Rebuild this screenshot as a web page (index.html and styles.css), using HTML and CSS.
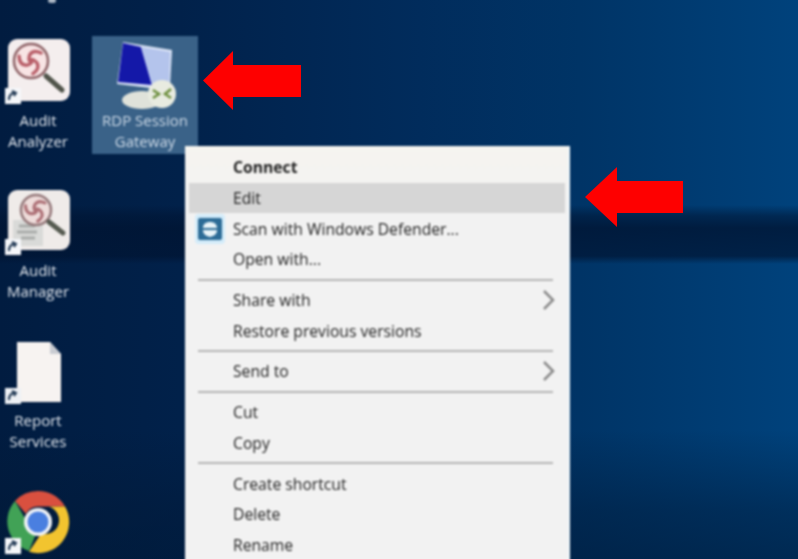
FILE: index.html
```html
<!DOCTYPE html>
<html lang="en">
<head>
<meta charset="utf-8">
<title>Desktop context menu</title>
<link rel="stylesheet" href="styles.css">
</head>
<body>
<main class="desktop">
  <span class="cut-label"></span>

  <div class="shortcut at-analyzer">
    <div class="glyph">
      <svg width="66" height="66" viewBox="0 0 66 66">
        <rect x="3" y="0" width="62" height="62" rx="9" fill="#f4eeee"/>
        <circle cx="26" cy="22" r="17" fill="#f8e4e4" stroke="#8f6468" stroke-width="2.500"/>
        <g transform="translate(26 22)" fill="none" stroke="#b9606a" stroke-width="3.500" stroke-linecap="round">
          <path d="M0 2C-5-4 0-13 10-8"/>
          <path d="M0 2C-5-4 0-13 10-8" transform="rotate(120)"/>
          <path d="M0 2C-5-4 0-13 10-8" transform="rotate(240)"/>
        </g>
        <path d="M41 37l16 14" stroke="#50544a" stroke-width="5" stroke-linecap="round"/>
        <rect x="0" y="49" width="16" height="16" fill="#f5f7fa"/>
        <path d="M4 61c0-5 2-7 6-7M7 52l4 2-2 3" fill="none" stroke="#223a55" stroke-width="2"/>
      </svg>
    </div>
    <p class="name">Audit<br>Analyzer</p>
  </div>

  <div class="shortcut at-manager">
    <div class="glyph">
      <svg width="66" height="66" viewBox="0 0 66 66">
        <rect x="3" y="0" width="62" height="60" rx="9" fill="#efebe9"/>
        <rect x="8" y="30" width="30" height="26" fill="#d9dad8"/>
        <path d="M14 36h16M12 42h20M16 48h14" stroke="#a9aca9" stroke-width="3"/>
        <circle cx="31" cy="20" r="15" fill="#eedcda" stroke="#94787a" stroke-width="2.500"/>
        <g transform="translate(31 20) scale(.88)" fill="none" stroke="#ad7076" stroke-width="3.500" stroke-linecap="round">
          <path d="M0 2C-5-4 0-13 10-8"/>
          <path d="M0 2C-5-4 0-13 10-8" transform="rotate(120)"/>
          <path d="M0 2C-5-4 0-13 10-8" transform="rotate(240)"/>
        </g>
        <path d="M44 32l14 11" stroke="#555a50" stroke-width="5" stroke-linecap="round"/>
        <rect x="0" y="49" width="16" height="16" fill="#f5f7fa"/>
        <path d="M4 61c0-5 2-7 6-7M7 52l4 2-2 3" fill="none" stroke="#223a55" stroke-width="2"/>
      </svg>
    </div>
    <p class="name">Audit<br>Manager</p>
  </div>

  <div class="shortcut at-report">
    <div class="glyph">
      <svg width="66" height="66" viewBox="0 0 66 66">
        <path d="M12 0h33l11 12v48H12z" fill="#f7f3f1"/>
        <path d="M45 0v12h11z" fill="#c9ccd2"/>
        <rect x="0" y="46" width="16" height="16" fill="#eef1f5"/>
        <path d="M4 58c0-5 2-7 6-7M7 49l4 2-2 3" fill="none" stroke="#223a55" stroke-width="2"/>
      </svg>
    </div>
    <p class="name">Report<br>Services</p>
  </div>

  <div class="shortcut at-chrome">
    <div class="glyph">
      <svg width="66" height="66" viewBox="0 0 66 66">
        <path d="M33 2a31 31 0 0 1 27 15.500H33a13 13 0 0 0-12 7.500L10 12A31 31 0 0 1 33 2z" fill="#d9503f"/>
        <path d="M10 12l12 21a12 12 0 0 0 9 12l-7 17A31 31 0 0 1 10 12z" fill="#41a256"/>
        <path d="M60 17.500A31 31 0 0 1 24 62.700l12-18a13 13 0 0 0 8-27z" fill="#f2c42f"/>
        <circle cx="33" cy="33" r="14" fill="#f2f4f7"/>
        <circle cx="33" cy="33" r="10.500" fill="#4a7fe0"/>
        <rect x="0" y="49" width="16" height="16" fill="#f5f7fa"/>
        <path d="M4 61c0-5 2-7 6-7M7 52l4 2-2 3" fill="none" stroke="#223a55" stroke-width="2"/>
      </svg>
    </div>
  </div>

  <div class="shortcut at-rdp selected">
    <div class="glyph">
      <svg width="66" height="70" viewBox="0 0 66 70">
        <path d="M11 1l49 8-2 37-3 3-50-6z" fill="#dde5f6"/>
        <path d="M11 2l18 4 11 38-34-3z" fill="#1418a8"/>
        <path d="M29 6l29 5-1 33-17 0z" fill="#b4c4ec"/>
        <ellipse cx="30" cy="59" rx="20" ry="9" fill="#dfe2da"/>
        <circle cx="50" cy="53" r="14" fill="#e8ebe0"/>
        <path d="M41 49l6 4-6 4M59 48l-6 5 6 4" fill="none" stroke="#6d8f3e" stroke-width="2.500"/>
      </svg>
    </div>
    <p class="name">RDP Session<br>Gateway</p>
  </div>

  <svg class="arrow arrow-one" width="98" height="59" viewBox="0 0 98 59"><path d="M0 29.500L30 0v14h68v32H30v13z"/></svg>
  <svg class="arrow arrow-two" width="98" height="60" viewBox="0 0 98 60"><path d="M0 30L32 0v14h66v32H32v14z"/></svg>

  <nav class="menu">
    <div class="item strong">Connect</div>
    <div class="item active">Edit</div>
    <div class="item">
      <svg class="shield" width="30" height="30" viewBox="0 0 30 30">
        <rect width="30" height="30" rx="4" fill="#d3ecfa"/>
        <rect x="3" y="4" width="24" height="22" rx="2" fill="#2c6b96"/>
        <path d="M8 14c0-4 3-6 7-6s7 2 7 6zM8 16h14c0 4-3 6-7 7-4-1-7-3-7-7z" fill="#e8f3f8"/>
      </svg>
      Scan with Windows Defender...
    </div>
    <div class="item">Open with...</div>
    <hr class="rule">
    <div class="item">Share with<svg class="chev" width="14" height="22" viewBox="0 0 14 22"><path d="M2 2l9 9-9 9"/></svg></div>
    <div class="item">Restore previous versions</div>
    <hr class="rule">
    <div class="item">Send to<svg class="chev" width="14" height="22" viewBox="0 0 14 22"><path d="M2 2l9 9-9 9"/></svg></div>
    <hr class="rule">
    <div class="item">Cut</div>
    <div class="item">Copy</div>
    <hr class="rule">
    <div class="item">Create shortcut</div>
    <div class="item">Delete</div>
    <div class="item">Rename</div>
  </nav>
</main>
</body>
</html>
```
FILE: styles.css
```css
* { box-sizing: border-box; }
html, body { margin: 0; height: 100%; overflow: hidden; background: #012a55; }

.desktop {
  position: relative;
  width: 798px;
  height: 559px;
  overflow: hidden;
  font-family: "Open Sans", "Liberation Sans", sans-serif;
  background:
    linear-gradient(180deg, transparent 0, transparent 205px, rgba(0, 20, 50, .55) 216px, rgba(0, 20, 50, .8) 228px, rgba(0, 20, 50, .7) 256px, transparent 264px),
    linear-gradient(180deg, transparent 0, transparent 430px, rgba(0, 25, 55, .45) 510px, rgba(0, 25, 55, .6) 559px),
    linear-gradient(90deg, #011c40 0, #01214a 180px, #012c5c 420px, #003466 580px, #00427c 798px);
}

.cut-label {
  position: absolute;
  left: 48px;
  top: -2px;
  width: 8px;
  height: 5px;
  border-radius: 3px;
  background: #aeb9c6;
  filter: blur(1px);
}

.shortcut {
  position: absolute;
  display: flex;
  flex-direction: column;
  align-items: center;
  filter: blur(1.1px);
}
.at-analyzer { left: 0; top: 39px; width: 76px; }
.at-manager  { left: 0; top: 190px; width: 76px; }
.at-report   { left: 0; top: 342px; width: 76px; }
.at-chrome   { left: 0; top: 489px; width: 76px; }
.at-rdp      { left: 92px; top: 36px; width: 106px; height: 118px; padding-top: 5px; }

.selected { background: #3a6288; }

.glyph { height: 71px; display: flex; justify-content: center; align-items: flex-start; }
.at-manager .glyph { height: 70px; }
.at-report .glyph { height: 68px; }
.selected .glyph { height: 68px; }
.glyph svg { display: block; }

.name {
  margin: 0;
  color: #e4e9ef;
  font-size: 15px;
  line-height: 21px;
  text-align: center;
  white-space: nowrap;
}
.selected .name { margin-top: 1px; color: #cfdbe8; }

.arrow { position: absolute; fill: #fe0000; }
.arrow-one { left: 203px; top: 51px; }
.arrow-two { left: 585px; top: 167px; }

.menu {
  position: absolute;
  left: 185px;
  top: 146px;
  width: 385px;
  padding: 6px 3px 4px 4px;
  background: linear-gradient(180deg, #f6f4f0 0, #f2f2f2 60px);
  border-right: 2px solid #eef6fa;
  color: #222;
  font-size: 15.700px;
  filter: blur(.95px);
}

.item {
  display: flex;
  align-items: center;
  justify-content: space-between;
  position: relative;
  height: 30.700px;
  padding: 0 9px 0 44px;
}
.strong { font-weight: 700; }
.active { background: #d6d6d6; }

.shield { position: absolute; left: 6px; top: 1px; }

.chev { fill: none; stroke: #8a8a8a; stroke-width: 2.500; }

.rule {
  height: 10px;
  margin: 0 12px 0 9px;
  border: 0;
  background: linear-gradient(#b4b4b4, #b4b4b4) center / 100% 2px no-repeat;
}
```
